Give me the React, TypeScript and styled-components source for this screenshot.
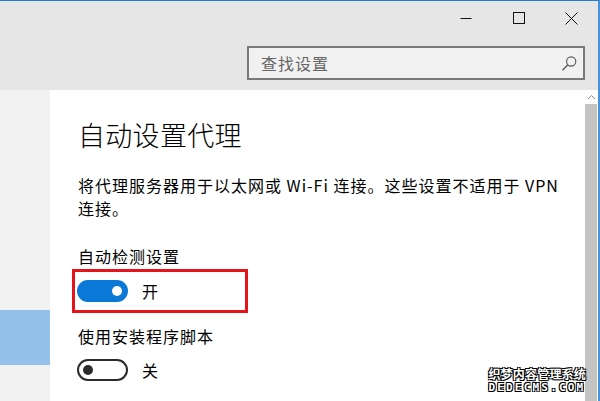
import React from 'react'
import styled, { createGlobalStyle } from 'styled-components'

const GlobalStyle = createGlobalStyle`
  html, body {
    margin: 0;
    padding: 0;
    background: #fff;
  }
  body {
    font-family: "Noto Sans CJK SC", "Noto Sans", sans-serif;
    color: #000;
  }
`

const Window = styled.div`
  position: relative;
  width: 600px;
  height: 401px;
  box-sizing: border-box;
  border-top: 1px solid #1f7fd4;
  border-right: 2px solid #4a93dc;
  display: flex;
  flex-direction: column;
  overflow: hidden;
  background: #e6e6e6;
`

const TitleBar = styled.div`
  height: 34px;
  display: flex;
  justify-content: flex-end;
`

const CaptionButton = styled.div`
  width: 53px;
  height: 34px;
  display: flex;
  align-items: center;
  justify-content: center;
`

const SearchRow = styled.div`
  display: flex;
  padding: 11px 13px 10px 0;
`

const SearchBox = styled.div`
  margin-left: auto;
  width: 338px;
  height: 34px;
  box-sizing: border-box;
  border: 2px solid #7a7a7a;
  background: #f1f1f1;
  display: flex;
  align-items: center;
  padding: 0 6px 0 12px;
`

const SearchText = styled.span`
  flex: 1;
  font-size: 16px;
  letter-spacing: 1px;
  color: #666;
`

const Body = styled.div`
  flex: 1;
  display: flex;
  min-height: 0;
`

const Nav = styled.nav`
  width: 50px;
  background: #f2f2f2;
  display: flex;
  flex-direction: column;
`

const NavItem = styled.div<{ $active?: boolean }>`
  height: 55px;
  background: ${p => (p.$active ? '#93c1ea' : 'transparent')};
`

const Content = styled.main`
  flex: 1;
  background: #fff;
  padding: 27px 0 0 28px;
`

const Title = styled.h1`
  margin: 0;
  font-size: 27px;
  line-height: 36px;
  font-weight: 300;
  letter-spacing: 0.3px;
`

const Description = styled.p`
  margin: 21px 0 0;
  width: 495px;
  font-size: 16px;
  line-height: 23px;
  letter-spacing: 1px;
`

const Label = styled.div<{ $gap: number }>`
  margin-top: ${p => p.$gap}px;
  font-size: 16px;
  line-height: 23px;
  letter-spacing: 1px;
`

const ToggleRow = styled.div<{ $highlighted?: boolean }>`
  width: 176px;
  height: 44px;
  box-sizing: border-box;
  margin: ${p => (p.$highlighted ? '1px' : '0')} 0 0 -6px;
  padding-left: 2px;
  border: 3px solid ${p => (p.$highlighted ? '#e5141b' : 'transparent')};
  display: flex;
  align-items: center;
`

const Toggle = styled.div<{ $on: boolean }>`
  width: 51px;
  height: 22px;
  box-sizing: border-box;
  border-radius: 11px;
  border: 2px solid ${p => (p.$on ? '#0a78d7' : '#2b2b2b')};
  background: ${p => (p.$on ? '#0a78d7' : '#fff')};
  display: flex;
  align-items: center;
  justify-content: ${p => (p.$on ? 'flex-end' : 'flex-start')};
  padding: 0 4px;
`

const Knob = styled.div<{ $on: boolean }>`
  width: 10px;
  height: 10px;
  border-radius: 50%;
  background: ${p => (p.$on ? '#fff' : '#2b2b2b')};
`

const StateText = styled.span`
  margin-left: 14px;
  font-size: 16px;
`

const Scrollbar = styled.div`
  width: 13px;
  background: #fff;
  display: flex;
  flex-direction: column;
`

const ScrollArrow = styled.div`
  height: 14px;
  display: flex;
  align-items: center;
  justify-content: center;
`

const ScrollThumb = styled.div`
  flex: 1;
  margin-right: 1px;
  background: #c3c3c3;
`

const Watermark = styled.div`
  position: absolute;
  right: 12px;
  bottom: 6px;
  color: #fff;
  font-weight: bold;
  text-shadow: -1px -1px 0 #000, 1px -1px 0 #000, -1px 1px 0 #000, 1px 1px 0 #000;
  line-height: 14px;
`

const WatermarkCn = styled.div`
  font-size: 12px;
  letter-spacing: 0.2px;
`

const WatermarkEn = styled.div`
  font-family: "DejaVu Sans Mono", monospace;
  font-size: 11px;
  letter-spacing: 2.2px;
`

const toggles = [
  { label: '使用安装程序脚本', on: false },
]

const App: React.FC = () => {
  return (
    <>
      <GlobalStyle />
      <Window>
        <TitleBar>
          <CaptionButton>
            <svg width="12" height="12" viewBox="0 0 12 12">
              <line x1="0.5" y1="6.5" x2="11.5" y2="6.5" stroke="#111" strokeWidth="1" />
            </svg>
          </CaptionButton>
          <CaptionButton>
            <svg width="12" height="12" viewBox="0 0 12 12">
              <rect x="0.5" y="0.5" width="11" height="11" fill="none" stroke="#111" strokeWidth="1" />
            </svg>
          </CaptionButton>
          <CaptionButton>
            <svg width="13" height="13" viewBox="0 0 13 13">
              <path d="M0.5 0.5 L12.5 12.5 M12.5 0.5 L0.5 12.5" stroke="#111" strokeWidth="1" />
            </svg>
          </CaptionButton>
        </TitleBar>

        <SearchRow>
          <SearchBox>
            <SearchText>查找设置</SearchText>
            <svg width="16" height="15" viewBox="0 0 16 15">
              <circle cx="10.2" cy="5.5" r="4.6" fill="none" stroke="#555" strokeWidth="1.1" />
              <line x1="6.9" y1="8.8" x2="1.5" y2="14.2" stroke="#555" strokeWidth="1.3" />
            </svg>
          </SearchBox>
        </SearchRow>

        <Body>
          <Nav>
            <NavItem />
            <NavItem />
            <NavItem />
            <NavItem />
            <NavItem $active />
          </Nav>

          <Content>
            <Title>自动设置代理</Title>
            <Description>
              将代理服务器用于以太网或 Wi-Fi 连接。这些设置不适用于 VPN 连接。
            </Description>

            <Label $gap={25}>自动检测设置</Label>
            <ToggleRow $highlighted>
              <Toggle $on>
                <Knob $on />
              </Toggle>
              <StateText>开</StateText>
            </ToggleRow>

            {toggles.map(t => (
              <React.Fragment key={t.label}>
                <Label $gap={12}>{t.label}</Label>
                <ToggleRow>
                  <Toggle $on={t.on}>
                    <Knob $on={t.on} />
                  </Toggle>
                  <StateText>{t.on ? '开' : '关'}</StateText>
                </ToggleRow>
              </React.Fragment>
            ))}
          </Content>

          <Scrollbar>
            <ScrollArrow>
              <svg width="9" height="6" viewBox="0 0 9 6">
                <path d="M1 5 L4.5 1.5 L8 5" fill="none" stroke="#888" strokeWidth="1" />
              </svg>
            </ScrollArrow>
            <ScrollThumb />
          </Scrollbar>
        </Body>

        <Watermark>
          <WatermarkCn>织梦内容管理系统</WatermarkCn>
          <WatermarkEn>DEDECMS.COM</WatermarkEn>
        </Watermark>
      </Window>
    </>
  )
}

export default App
